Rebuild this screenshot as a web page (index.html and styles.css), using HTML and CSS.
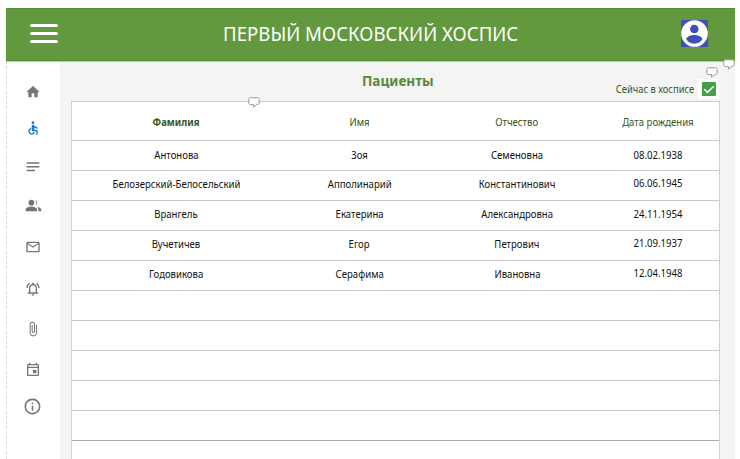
FILE: index.html
```html
<!DOCTYPE html>
<html lang="ru">
<head>
<meta charset="utf-8">
<title>Первый московский хоспис</title>
<link rel="stylesheet" href="styles.css">
</head>
<body>
<div class="app">
  <header class="header">
    <div class="menu"><i></i><i></i><i></i></div>
    <h1 class="title"><span>ПЕРВЫЙ МОСКОВСКИЙ ХОСПИС</span></h1>
    <svg class="avatar" viewBox="0 0 26 26"><path fill="#3f51b5" d="M0 0h26v26H0z"/><circle cx="13" cy="13" r="12.8" fill="#fff"/><circle cx="12.8" cy="8.7" r="4.1" fill="#3f51b5"/><path fill="#3f51b5" d="M5 18.3c1-2.600 4.700-3.800 7.800-3.800s6.900 1.200 7.900 3.800c-1.500 2.700-4.300 4.500-7.900 4.500S6.500 21 5 18.300z"/></svg>
    <svg class="note note-page" viewBox="0 0 12 11"><path d="M2.500.8h7c1 0 1.700.6 1.700 1.600v3.600c0 1-.7 1.600-1.700 1.600H8.300L5.600 10.200V7.600H2.500C1.500 7.600 .8 7 .8 6v-3.600C.8 1.400 1.500.8 2.500.8z"/></svg>
  </header>
  <div class="body">
    <nav class="nav">
      <a><svg class="icon" viewBox="0 0 24 24"><path d="M10 20v-6h4v6h5v-8h3L12 3 2 12h3v8z"/></svg></a>
      <a class="active"><svg class="icon" viewBox="0 0 24 24"><circle cx="12" cy="4" r="2"/><path d="M19 13v-2c-1.540.020-3.090-.750-4.070-1.830l-1.290-1.430c-.170-.190-.380-.340-.610-.450-.010 0-.010-.010-.020-.010H13c-.350-.200-.750-.300-1.190-.260C10.760 7.110 10 8.040 10 9.090V15c0 1.100.9 2 2 2h5v5h2v-5.500c0-1.100-.9-2-2-2h-3v-3.450c1.290 1.070 3.250 1.940 5 1.950zm-6.170 5c-.410 1.160-1.520 2-2.830 2-1.660 0-3-1.340-3-3 0-1.310.84-2.410 2-2.830V12.100c-2.280.460-4 2.480-4 4.900 0 2.760 2.240 5 5 5 2.420 0 4.440-1.720 4.900-4h-2.070z"/></svg></a>
      <a><svg class="icon" viewBox="0 0 24 24"><path d="M2.500 5h19v2.200h-19zM2.500 10.500h19v2.200h-19zM2.500 16H15v2.200H2.500z"/></svg></a>
      <a><svg class="icon people" viewBox="0 0 24 24"><circle cx="9" cy="8" r="4"/><path d="M9 13.500c-3 0-8 1.500-8 4.200V20h16v-2.300c0-2.700-5-4.200-8-4.200zM14.500 4.200c1 1 1.500 2.300 1.500 3.800s-.5 2.800-1.500 3.800A4 4 0 0 0 14.500 4.200zM16.700 13.600c1.500 1 2.300 2.300 2.300 4.100V20h4v-2.300c0-2-2.900-3.600-6.300-4.100z"/></svg></a>
      <a><svg class="icon" viewBox="0 0 24 24"><path d="M20 4H4c-1.100 0-2 .9-2 2v12c0 1.100.9 2 2 2h16c1.100 0 2-.9 2-2V6c0-1.100-.9-2-2-2zm0 14H4V8l8 5 8-5v10zm-8-7L4 6h16l-8 5z"/></svg></a>
      <a><svg class="icon bell" viewBox="0 0 24 24"><path d="M12 22c1.100 0 2-.9 2-2h-4c0 1.100.9 2 2 2zm6-6v-5c0-3.070-1.630-5.640-4.500-6.320V4c0-.83-.67-1.500-1.500-1.500s-1.500.67-1.500 1.500v.68C7.640 5.360 6 7.920 6 11v5l-2 2v1h16v-1l-2-2zm-2 1H8v-6c0-2.480 1.510-4.500 4-4.500s4 2.020 4 4.500v6zM7.580 4.080L6.150 2.650C3.750 4.480 2.170 7.300 2.030 10.500h2c.15-2.650 1.510-4.970 3.550-6.420zM19.970 10.500h2c-.15-3.200-1.730-6.020-4.120-7.850l-1.420 1.430c2.020 1.450 3.390 3.770 3.540 6.420z"/></svg></a>
      <a><svg class="icon clip" viewBox="0 0 24 24"><path d="M16.500 6v11.500c0 2.210-1.790 4-4 4s-4-1.790-4-4V5c0-1.380 1.120-2.500 2.500-2.500s2.500 1.120 2.500 2.500v10.500c0 .55-.45 1-1 1s-1-.45-1-1V6H10v9.500c0 1.380 1.120 2.500 2.500 2.500s2.500-1.120 2.500-2.500V5c0-2.210-1.790-4-4-4S7 2.790 7 5v12.500c0 3.040 2.460 5.500 5.500 5.500s5.500-2.460 5.500-5.500V6h-1.500z"/></svg></a>
      <a><svg class="icon" viewBox="0 0 24 24"><path d="M19 3h-1V1h-2v2H8V1H6v2H5c-1.110 0-2 .9-2 2v14c0 1.100.89 2 2 2h14c1.100 0 2-.9 2-2V5c0-1.100-.9-2-2-2zm0 16H5V9h14v10zm0-12H5V5h14v2zM12 12h5v5h-5z"/></svg></a>
      <a><svg class="icon info" viewBox="0 0 24 24"><path d="M11 7h2v2h-2zm0 4h2v6h-2zm1-9C6.480 2 2 6.480 2 12s4.480 10 10 10 10-4.480 10-10S17.520 2 12 2zm0 18c-4.410 0-8-3.590-8-8s3.590-8 8-8 8 3.590 8 8-3.590 8-8 8z"/></svg></a>
    </nav>
    <main class="main">
      <div class="toolbar">
        <h2 class="heading"><span>Пациенты</span></h2>
        <label class="filter"><span>Сейчас в хосписе</span><b class="box"><svg viewBox="0 0 14 14"><rect width="14" height="14" rx="1" fill="#43a047"/><path d="M2.300 7.200l3.200 3.200 6.200-6.200" fill="none" stroke="#fff" stroke-width="1.500"/></svg></b></label>
        <svg class="note note-filter" viewBox="0 0 12 11"><path d="M2.500.8h7c1 0 1.700.6 1.700 1.600v3.600c0 1-.7 1.600-1.700 1.600H8.300L5.600 10.200V7.600H2.500C1.500 7.600 .8 7 .8 6v-3.600C.8 1.400 1.500.8 2.500.8z"/></svg>
      </div>
      <div class="table">
        <svg class="note note-table" viewBox="0 0 12 11"><path d="M2.500.8h7c1 0 1.700.6 1.700 1.600v3.600c0 1-.7 1.600-1.700 1.600H8.300L5.600 10.200V7.600H2.500C1.500 7.600 .8 7 .8 6v-3.600C.8 1.400 1.500.8 2.500.8z"/></svg>
        <div class="row head"><span class="sorted">Фамилия</span><span>Имя</span><span>Отчество</span><span>Дата рождения</span></div>
        <div class="row first"><span>Антонова</span><span>Зоя</span><span>Семеновна</span><span class="date">08.02.1938</span></div>
        <div class="row"><span>Белозерский-Белосельский</span><span>Апполинарий</span><span>Константинович</span><span class="date raised">06.06.1945</span></div>
        <div class="row"><span>Врангель</span><span>Екатерина</span><span>Александровна</span><span class="date">24.11.1954</span></div>
        <div class="row"><span>Вучетичев</span><span>Егор</span><span>Петрович</span><span class="date raised">21.09.1937</span></div>
        <div class="row"><span>Годовикова</span><span>Серафима</span><span>Ивановна</span><span class="date raised">12.04.1948</span></div>
        <div class="row"></div>
        <div class="row"></div>
        <div class="row"></div>
        <div class="row"></div>
        <div class="row strong"></div>
        <div class="row"></div>
      </div>
    </main>
  </div>
</div>
</body>
</html>
```
FILE: styles.css
```css
* { box-sizing: border-box; }
body { margin: 0; height: 459px; overflow: hidden; background: #fff; font-family: "Noto Sans", "Open Sans", sans-serif; }
h1, h2 { margin: 0; font-weight: 400; }
.app { margin: 8px 5px 0 6px; height: 451px; display: flex; flex-direction: column; }

.header { position: relative; z-index: 1; flex: none; height: 52.500px; padding: 0 27px 1px 24px; display: flex; align-items: center; background: #62993e; border-top: 1px solid #538a32; border-bottom: 1px solid #538a32; box-shadow: 0 1px 1px #b9d3a8; }
.menu { width: 28px; display: flex; flex-direction: column; gap: 5px; }
.menu i { height: 3px; border-radius: 2px; background: #fff; }
.title { flex: 1; text-align: center; color: #fff; font-size: 20px; line-height: 28px; white-space: nowrap; }
.title span { display: inline-block; transform: translateX(1px) scaleX(.93); }
.avatar { width: 27px; height: 27px; }

.body { flex: 1; min-height: 0; display: flex; }
.nav { width: 54px; border-left: 1px dashed #ddd; padding: 22px 2px 0 0; display: flex; flex-direction: column; align-items: center; }
.nav a { flex: none; height: 18px; margin-bottom: 21px; display: flex; align-items: center; justify-content: center; color: #757575; }
.nav a:nth-child(1) { margin-bottom: 18px; }
.nav a:nth-child(4), .nav a:nth-child(5) { margin-bottom: 23.500px; }
.nav a:nth-child(6) { margin-bottom: 22px; }
.nav a:nth-child(7) { margin-bottom: 23px; }
.nav a:nth-child(8) { margin-bottom: 19px; }
.nav .active { color: #1976d2; }
.icon { width: 16px; height: 16px; fill: currentColor; }
.people { width: 17px; height: 17px; margin-left: 2px; }
.info { width: 19px; height: 19px; }

.main { flex: 1; padding: 0 15px 0 11px; background: #f4f4f4; overflow: hidden; }
.toolbar { position: relative; height: 40.500px; display: flex; justify-content: flex-end; align-items: flex-end; }
.heading { flex: 1; align-self: flex-start; padding: 10px 0 0 291px; color: #558b38; font-size: 14px; font-weight: 700; line-height: 20px; }
.heading span { display: inline-block; transform-origin: left; transform: scaleX(.97); }
.filter { display: flex; align-items: center; gap: 4px; margin: 0 1px 2px 0; color: #375623; font-size: 11px; }
.filter span { transform-origin: right; transform: translateY(-1px) scaleX(.85); }
.box { width: 21px; height: 20px; display: flex; align-items: center; justify-content: center; background: #fff; }
.box svg { width: 14px; height: 14px; }

.table { position: relative; border: 1px solid #ccc; border-left: 1.500px solid #d2d2d2; border-right: 1px solid #ccd2d8; background: #fff; color: #111; font-size: 11px; }
.row { height: 30.100px; padding-bottom: 3px; display: grid; grid-template-columns: 208px 159px 156px 1fr; align-items: center; justify-items: center; border-bottom: 1px solid #cacaca; white-space: nowrap; }
.row span { transform: scaleX(.87); }
.row span:last-child { padding-left: 3px; }
.first { padding-bottom: 1px; }
.head { height: 38.500px; color: #375623; padding: 2px 0 0; }
.head .sorted { font-weight: 700; }
.raised { margin-top: -2px; }
.strong { border-bottom-color: #aaa; }

.note { position: absolute; width: 12px; height: 11px; fill: #fff; stroke: #999; stroke-width: 1; }
.note-page { right: 0; top: 50px; }
.note-filter { right: 2px; top: 6px; }
.note-table { left: 176px; top: -5px; }
```
